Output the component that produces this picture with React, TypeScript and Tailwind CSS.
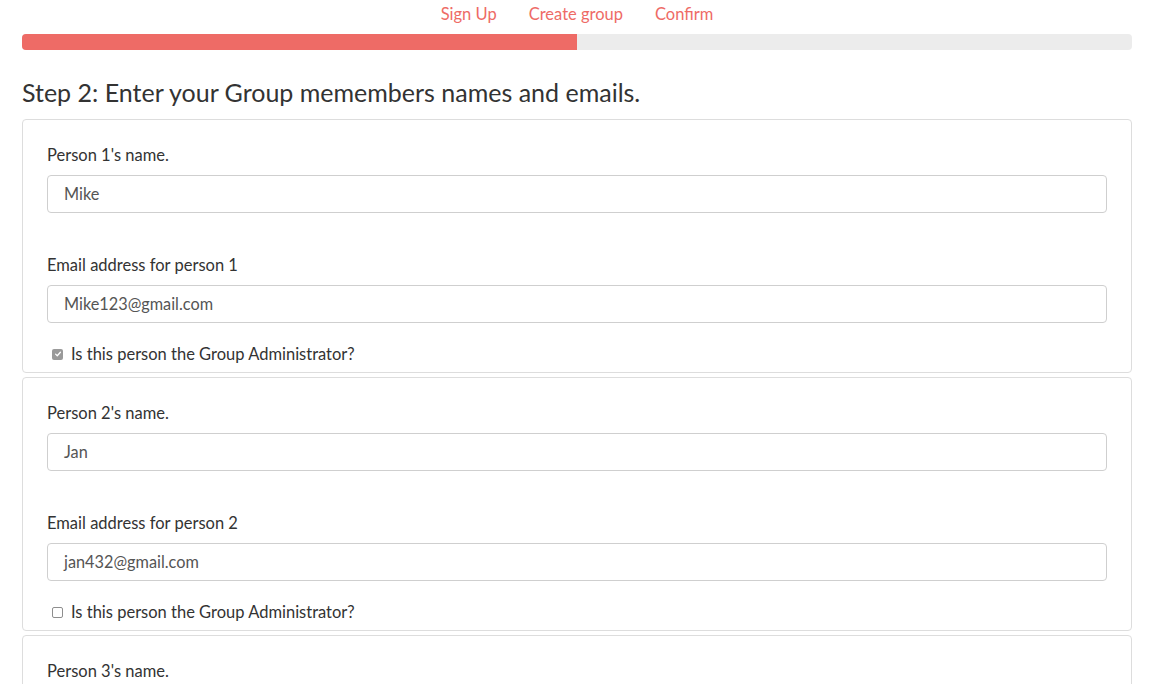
import React from 'react';

type Person = {
    name: string;
    email: string;
    admin: boolean;
};

const PEOPLE: Person[] = [
    { name: 'Mike', email: 'Mike123@gmail.com', admin: true },
    { name: 'Jan', email: 'jan432@gmail.com', admin: false },
    { name: '', email: '', admin: false },
];

function AdminCheck({ checked }: { checked: boolean }) {
    if (checked) {
        return (
            <span className="flex items-center justify-center w-[11px] h-[11px] rounded-[2px] bg-[#9a9a9a]">
                <svg viewBox="0 0 10 10" className="w-[8px] h-[8px]">
                    <path
                        d="M2 5.2 L4.1 7.2 L8 2.8"
                        fill="none"
                        stroke="white"
                        strokeWidth="1.6"
                        strokeLinecap="round"
                        strokeLinejoin="round"
                    />
                </svg>
            </span>
        );
    }
    return (
        <span className="block w-[11px] h-[11px] rounded-[2px] border border-[#8e8e8e] bg-white" />
    );
}

function PersonCard({ person, index }: { person: Person; index: number }) {
    return (
        <div className="border border-[#dddddd] rounded-[4px] px-6 pt-6 pb-[7px] mb-[4px]">
            <label className="block leading-[22px] text-[16.5px] text-[#333] mb-[9px]">
                Person {index}'s name.
            </label>
            <div className="h-[38px] border border-[#cfcfcf] rounded-[4px] px-4 flex items-center text-[16.3px] text-[#555]">
                {person.name}
            </div>
            <label className="block leading-[22px] text-[16.5px] text-[#333] mt-[41px] mb-[9px]">
                Email address for person {index}
            </label>
            <div className="h-[38px] border border-[#cfcfcf] rounded-[4px] px-4 flex items-center text-[16.3px] text-[#555]">
                {person.email}
            </div>
            <div className="flex items-center gap-[8px] mt-[20px] pl-[5px] leading-[22px] text-[16.5px] text-[#333]">
                <AdminCheck checked={person.admin} />
                <span>Is this person the Group Administrator?</span>
            </div>
        </div>
    );
}

export default function App() {
    return (
        <div className="w-[1160px] h-[684px] overflow-hidden bg-white font-['Lato','Open_Sans',sans-serif]">
            <div className="px-[22px] w-[1154px]">
                <nav className="flex justify-center gap-8 pt-[2px] h-[34px] text-[16.5px] text-[#ee6b66] leading-[24px]">
                    <span>Sign Up</span>
                    <span>Create group</span>
                    <span>Confirm</span>
                </nav>
                <div className="h-[16px] rounded-[4px] bg-[#ececec] overflow-hidden">
                    <div className="h-full w-1/2 bg-[#ee6b66]" />
                </div>
                <h2 className="text-[25px] leading-[32px] text-[#333] mt-[26px] mb-[11px]">
                    Step 2: Enter your Group memembers names and emails.
                </h2>
                {PEOPLE.map((p, i) => (
                    <PersonCard key={i} person={p} index={i + 1} />
                ))}
            </div>
        </div>
    );
}
